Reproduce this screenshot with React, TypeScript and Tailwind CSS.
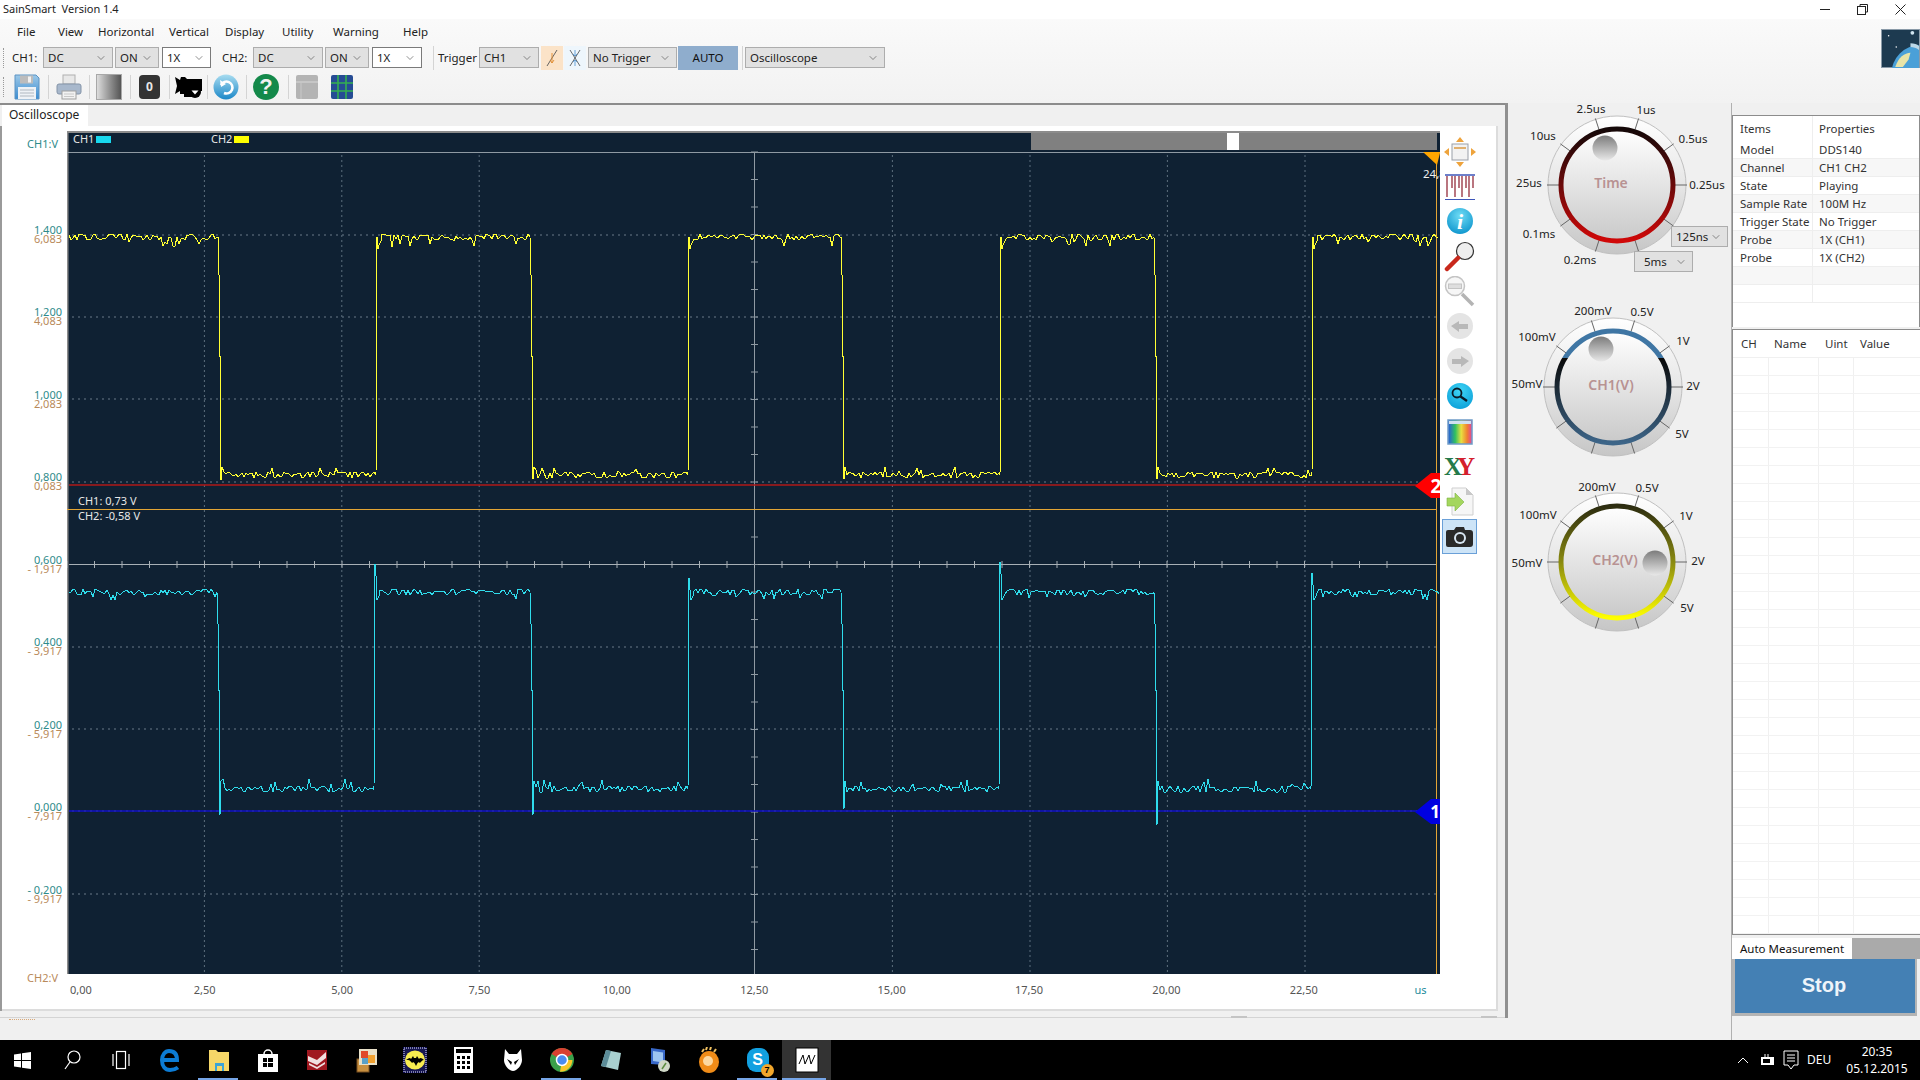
import { ChevronDown } from "lucide-react";

// pseudo random noise so the traces look the same on every render
function makeWave(seed: number, high: number, low: number, edges: { x: number; over: number }[], spikeHi: number, spikeLo: number) {
  let r = seed;
  const rand = () => {
    r = (r * 16807) % 2147483647;
    return r / 2147483647;
  };
  let isHigh = true;
  let cur = 69;
  let d = `M69 ${high}`;
  const noise = (from: number, to: number) => {
    for (let x = from; x < to; x += 2) {
      const p = rand();
      let y = isHigh ? high : low;
      if (p < 0.42) y -= 1 + Math.round(rand() * 2);
      else if (p < 0.8) y += 1 + Math.round(rand() * 2);
      if (rand() < 0.07) y += isHigh ? spikeHi : -spikeLo;
      d += `L${x} ${y}`;
    }
  };
  for (const e of edges) {
    noise(cur, e.x);
    const span = low - high;
    if (isHigh) {
      d += `L${e.x} ${high}L${e.x + 0.5} ${high + span * 0.12}L${e.x + 1.5} ${high + span * 0.2}L${e.x + 1.5} ${high + span * 0.5}L${e.x + 2.5} ${high + span * 0.5}L${e.x + 3} ${low + e.over}L${e.x + 4} ${low - 8}`;
    } else {
      d += `L${e.x} ${low}L${e.x + 1} ${high - e.over}L${e.x + 2} ${high - e.over + 12}L${e.x + 3} ${high + 8}L${e.x + 5} ${high + 4}`;
    }
    cur = e.x + 6;
    isHigh = !isHigh;
  }
  noise(cur, 1440);
  return d;
}

const yellowWave = makeWave(4711, 237, 475, [
  { x: 218, over: 5 }, { x: 376, over: 0 }, { x: 530, over: 4 }, { x: 688, over: 0 },
  { x: 841, over: 4 }, { x: 1000, over: 0 }, { x: 1154, over: 4 }, { x: 1312, over: 0 },
], 7, 5);

const cyanWave = makeWave(90210, 592, 789, [
  { x: 217, over: 26 }, { x: 374, over: 28 }, { x: 530, over: 26 }, { x: 688, over: 14 },
  { x: 841, over: 20 }, { x: 999, over: 30 }, { x: 1154, over: 36 }, { x: 1311, over: 19 },
], 5, 7);

const gridX = [204.4, 341.8, 479.2, 892.4, 1030, 1167.4, 1305];
const gridY = [235, 317, 399, 482, 647, 729, 811, 894];
const ticksH = Array.from({ length: 49 }, (_, i) => 67 + i * 27.5);
const ticksV = Array.from({ length: 30 }, (_, i) => 152 + i * 27.5);

const yLabels = [
  ["1,400", "6,083"], ["1,200", "4,083"], ["1,000", "2,083"], ["0,800", "0,083"], ["0,600", "- 1,917"],
  ["0,400", "- 3,917"], ["0,200", "- 5,917"], ["0,000", "- 7,917"], ["- 0,200", "- 9,917"],
];
const xLabels = ["2,50", "5,00", "7,50", "10,00", "12,50", "15,00", "17,50", "20,00", "22,50"];

function Combo({ label, className, white }: { label: string; className: string; white?: boolean }) {
  return (
    <div className={`flex h-[21px] items-center justify-between border pl-[4px] pr-[5px] text-[11.5px] text-[#222] ${white ? "bg-white border-[#7a7a7a]" : "bg-[#e1e1e1] border-[#adadad]"} ${className}`}>
      <span>{label}</span>
      <ChevronDown size={12} strokeWidth={1.2} className="text-[#444]" />
    </div>
  );
}

function Sep({ className }: { className: string }) {
  return <div className={`h-[24px] w-px bg-[#d4d4d4] ${className}`} />;
}

function Grip() {
  return <div className="ml-[3px] h-[20px] w-px border-l border-dotted border-[#999]" />;
}

function Plot() {
  return (
    <svg width={1373} height={843} viewBox="67 131 1373 843" className="block font-['Noto_Sans',sans-serif]">
      <rect x={67} y={131} width={1373} height={843} fill="#0f2133" />
      <rect x={67} y={131} width={1373} height={2} fill="#8c8c8c" />
      <rect x={67} y={131} width={1.5} height={843} fill="#8c8c8c" />
      <text x={73} y={143} fontSize={11} fill="#e8e8e8">CH1</text>
      <rect x={96} y={136} width={15} height={7} fill="#18d8ee" />
      <text x={211} y={143} fontSize={11} fill="#e8e8e8">CH2</text>
      <rect x={234} y={136} width={15} height={7} fill="#ffff00" />
      <rect x={1031} y={133} width={406} height={17} fill="#808080" />
      <rect x={1227} y={133} width={12} height={17} fill="#ffffff" />

      {gridY.map((y) => (
        <line key={y} x1={72} x2={1437} y1={y} y2={y} stroke="#6b7b89" strokeDasharray="2 4" />
      ))}
      {gridX.map((x) => (
        <line key={x} x1={x} x2={x} y1={155} y2={974} stroke="#5d6f7e" strokeDasharray="2 3" />
      ))}
      <line x1={67} x2={1437} y1={152.5} y2={152.5} stroke="#8f9aa3" />
      <line x1={69} x2={1437} y1={564.5} y2={564.5} stroke="#a8b0b6" />
      <line x1={754.5} x2={754.5} y1={152} y2={974} stroke="#8f9aa3" />
      {ticksH.map((x) => (
        <line key={x} x1={x} x2={x} y1={561} y2={568} stroke="#a8b0b6" />
      ))}
      {ticksV.map((y) => (
        <line key={y} x1={751} x2={758} y1={y} y2={y} stroke="#8f9aa3" />
      ))}

      <line x1={69} x2={1437} y1={485} y2={485} stroke="#b01818" strokeWidth={1.4} />
      <line x1={69} x2={1437} y1={811} y2={811} stroke="#1010c8" strokeWidth={1.4} />
      <line x1={67} x2={1437} y1={509.5} y2={509.5} stroke="#e3a535" />
      <line x1={1436.5} x2={1436.5} y1={152} y2={974} stroke="#e3a535" />

      <path d={yellowWave} fill="none" stroke="#ffff33" strokeWidth={1} shapeRendering="crispEdges" />
      <path d={cyanWave} fill="none" stroke="#2fdcec" strokeWidth={1} shapeRendering="crispEdges" />

      <text x={78} y={505} fontSize={11} fill="#e8e8e8">CH1: 0,73 V</text>
      <text x={78} y={520} fontSize={11} fill="#e8e8e8">CH2: -0,58 V</text>

      <path d="M1423 152H1440V153L1437 165Z" fill="#ffa500" />
      <text x={1423} y={178} fontSize={11.5} fill="#f0f0f0">24,8</text>

      <path d="M1415 486L1431 473H1440V498H1431Z" fill="#ff0000" />
      <text x={1436} y={493} fontSize={19} fontWeight={700} fill="#fff" textAnchor="middle">2</text>
      <path d="M1415 812L1431 799H1440V824H1431Z" fill="#0000e0" />
      <text x={1435} y={818} fontSize={17} fontWeight={700} fill="#fff" textAnchor="middle">1</text>
    </svg>
  );
}

function Slot({ children, className = "" }: { children: React.ReactNode; className?: string }) {
  return <div className={`flex h-[35px] w-[35px] items-center justify-center ${className}`}>{children}</div>;
}

function SideIcons() {
  return (
    <div className="ml-px flex w-[35px] flex-col pt-[3px]">
      <Slot>
        <svg width={32} height={30} viewBox="0 0 32 30">
          <rect x="8" y="7" width="16" height="16" fill="#f2f2f2" stroke="#9a9fa8" />
          <rect x="10" y="10" width="12" height="2" fill="#e0b070" />
          <path d="M16 0l4 5h-8zM16 30l-4-5h8zM0 15l5-4v8zM32 15l-5 4v-8z" fill="#eea33c" />
        </svg>
      </Slot>
      <Slot>
        <svg width={32} height={26} viewBox="0 0 32 26">
          <path d="M1 1h30" stroke="#3d55b8" strokeWidth="1.5" />
          <path d="M3 2v21M8 2v12M11 2v21M15 2v12M18 2v21M22 2v12M25 2v21M29 2v12" stroke="#8c1c2c" strokeWidth="1.2" />
          <path d="M1 25.5h30" stroke="#3d55b8" />
        </svg>
      </Slot>
      <Slot>
        <svg width={28} height={30} viewBox="0 0 28 30">
          <defs>
            <radialGradient id="infoG" cx="50%" cy="30%" r="75%">
              <stop offset="0" stopColor="#6fdcf5" />
              <stop offset="1" stopColor="#0b93cc" />
            </radialGradient>
          </defs>
          <circle cx="14" cy="14" r="13" fill="url(#infoG)" />
          <text x="14" y="22" fontSize="22" fontWeight="700" fontStyle="italic" fill="#fff" textAnchor="middle" fontFamily="Liberation Serif, serif">i</text>
        </svg>
      </Slot>
      <Slot>
        <svg width={32} height={32} viewBox="0 0 32 32">
          <circle cx="21" cy="10" r="8.5" fill="#eeeeee" stroke="#333" strokeWidth="1.2" />
          <path d="M14 17L3 28" stroke="#c8281c" strokeWidth="4.5" strokeLinecap="round" />
        </svg>
      </Slot>
      <Slot>
        <svg width={32} height={32} viewBox="0 0 32 32">
          <circle cx="11" cy="10" r="9.5" fill="#f6f6f6" stroke="#c4c4c4" strokeWidth="1.5" />
          <rect x="4.5" y="8" width="13" height="4.5" fill="#dedede" stroke="#c4c4c4" />
          <path d="M18 18L29 29" stroke="#b4b4b4" strokeWidth="3.5" />
        </svg>
      </Slot>
      <Slot>
        <svg width={28} height={30} viewBox="0 0 28 30">
          <circle cx="14" cy="14" r="13" fill="#e4e4e4" />
          <path d="M5 14l8-5v3h9v5h-9v3z" fill="#b8b8b8" />
        </svg>
      </Slot>
      <Slot>
        <svg width={28} height={30} viewBox="0 0 28 30">
          <circle cx="14" cy="14" r="13" fill="#e4e4e4" />
          <path d="M23 14l-8-5v3H6v5h9v3z" fill="#b8b8b8" />
        </svg>
      </Slot>
      <Slot>
        <svg width={28} height={30} viewBox="0 0 28 30">
          <defs>
            <radialGradient id="searchG" cx="50%" cy="30%" r="75%">
              <stop offset="0" stopColor="#3fd4f5" />
              <stop offset="1" stopColor="#0a9fd8" />
            </radialGradient>
          </defs>
          <circle cx="14" cy="14" r="13" fill="url(#searchG)" />
          <circle cx="11" cy="11" r="4.5" fill="none" stroke="#0b1a26" strokeWidth="1.8" />
          <path d="M14.5 14.5L21 19" stroke="#0b1a26" strokeWidth="2.4" />
        </svg>
      </Slot>
      <Slot>
        <svg width={26} height={26} viewBox="0 0 26 26">
          <defs>
            <linearGradient id="rainbowG" x1="0" x2="1" y1="0" y2="0">
              <stop offset="0" stopColor="#2858e0" />
              <stop offset="0.3" stopColor="#30c060" />
              <stop offset="0.55" stopColor="#e8e040" />
              <stop offset="0.8" stopColor="#f08030" />
              <stop offset="1" stopColor="#e040a0" />
            </linearGradient>
          </defs>
          <rect x="1" y="1" width="24" height="24" fill="url(#rainbowG)" stroke="#6f9cc8" strokeWidth="1.5" />
          <rect x="2" y="2" width="22" height="3" fill="#cfe0f0" />
        </svg>
      </Slot>
      <Slot>
        <div className="font-['Liberation_Serif',serif] text-[25px] leading-none font-bold">
          <span className="text-[#257a4a]">X</span>
          <span className="-ml-[5px] text-[#d4202c]">Y</span>
        </div>
      </Slot>
      <Slot>
        <svg width={28} height={30} viewBox="0 0 28 30">
          <path d="M6 1h14l7 7v20H6z" fill="#f6f6f6" stroke="#cfcfcf" />
          <path d="M20 1l7 7h-7z" fill="#c8c8c8" />
          <path d="M1 11h8V6l9 9-9 9v-5H1z" fill="#a4d65e" stroke="#7cb342" strokeWidth="0.6" />
        </svg>
      </Slot>
      <Slot className="border border-[#6aa0d8] bg-[#cde4f7]">
        <svg width={27} height={22} viewBox="0 0 27 22">
          <path d="M2 4h6l2-3h8l1 3h5a3 3 0 0 1 3 3v11a3 3 0 0 1-3 3H2a2 2 0 0 1-2-2V6a2 2 0 0 1 2-2z" fill="#2a2a2a" />
          <circle cx="14" cy="12" r="6" fill="#d8e6f2" />
          <circle cx="14" cy="12" r="4" fill="#2a2a2a" />
        </svg>
      </Slot>
    </div>
  );
}

function Scope() {
  return (
    <div className="flex h-[885px] w-[1496px] border-r-2 border-b-2 border-[#dcdcdc] bg-white pt-[5px]">
      <div className="flex w-[65px] flex-col items-end pr-[5px] text-[11px] text-[#2e8b8b]">
        <div className="flex h-[26px] items-center pr-[4px]">CH1:V</div>
        <div className="h-[67.5px]" />
        {yLabels.map(([a, b]) => (
          <div key={a} className="flex h-[82.5px] flex-col items-end leading-[9px]">
            <span>{a}</span>
            <span className="text-[#b98a5a]">{b}</span>
          </div>
        ))}
        <div className="flex h-[22px] items-center pr-[4px] text-[#b98a5a]">CH2:V</div>
      </div>
      <div className="flex w-[1374px] flex-col">
        <Plot />
        <div className="flex h-[32px] items-center text-center text-[11px] text-[#555]">
          <span className="w-[28px]">0,00</span>
          <span className="w-[41px]" />
          {xLabels.map((l) => (
            <span key={l} className="w-[137.4px]">{l}</span>
          ))}
          <span className="ml-[38px] w-[20px] text-[#1c8c9c]">us</span>
        </div>
      </div>
      <SideIcons />
    </div>
  );
}

type KnobProps = {
  id: string;
  cx: number;
  cy: number;
  top: number;
  h: number;
  title: string;
  titleX: number;
  titleY: number;
  dotX: number;
  dotY: number;
  stops: [string, string][];
  labels: [string, number, number][];
};

function Knob({ id, cx, cy, top, h, title, titleX, titleY, dotX, dotY, stops, labels }: KnobProps) {
  const angles = [18, 54, 90, 126, 162, 198, 234, 270, 306, 342];
  return (
    <svg width={223} height={h} viewBox={`1508 ${top} 223 ${h}`} className="block font-['Noto_Sans',sans-serif]">
      <defs>
        <linearGradient id={`${id}-o`} x1="0" x2="0" y1="0" y2="1">
          <stop offset="0" stopColor="#ffffff" />
          <stop offset="0.5" stopColor="#e6e6e6" />
          <stop offset="1" stopColor="#c6c6c6" />
        </linearGradient>
        <linearGradient id={`${id}-i`} x1="0" x2="0" y1="0" y2="1">
          <stop offset="0" stopColor="#ffffff" />
          <stop offset="1" stopColor="#c9c9c9" />
        </linearGradient>
        <linearGradient id={`${id}-r`} x1="0" x2="0" y1="0" y2="1">
          {stops.map(([o, c], i) => (
            <stop key={i} offset={o} stopColor={c} />
          ))}
        </linearGradient>
        <linearGradient id={`${id}-d`} x1="0" x2="0" y1="0" y2="1">
          <stop offset="0" stopColor="#7c7c7c" />
          <stop offset="1" stopColor="#e8e8e8" />
        </linearGradient>
      </defs>
      <circle cx={cx} cy={cy} r={69} fill={`url(#${id}-o)`} stroke="#c0c0c0" />
      {angles.map((a) => {
        const s = Math.sin((a * Math.PI) / 180);
        const c = Math.cos((a * Math.PI) / 180);
        return <line key={a} x1={cx + s * 58} y1={cy - c * 58} x2={cx + s * 70} y2={cy - c * 70} stroke="#666" />;
      })}
      <circle cx={cx} cy={cy} r={56} fill={`url(#${id}-i)`} stroke={`url(#${id}-r)`} strokeWidth={5} />
      <circle cx={dotX} cy={dotY} r={12.5} fill={`url(#${id}-d)`} />
      <text x={titleX} y={titleY} fontSize={14} fontWeight={600} fill="#b89292" textAnchor="middle" dominantBaseline="central">{title}</text>
      {labels.map(([t, x, y]) => (
        <text key={t} x={x} y={y} fontSize={11.5} fill="#222" textAnchor="middle" dominantBaseline="central">{t}</text>
      ))}
    </svg>
  );
}

function KnobColumn() {
  return (
    <div className="flex w-[223px] flex-col">
      <div className="relative h-[182px]">
        <Knob
          id="t" cx={1617} cy={185} top={103} h={182} title="Time" titleX={1611} titleY={182} dotX={1605} dotY={148}
          stops={[["0", "#140808"], ["0.5", "#6a0a0a"], ["1", "#d00808"]]}
          labels={[["2.5us", 1591, 108], ["1us", 1646, 109], ["0.5us", 1693, 138], ["0.25us", 1707, 184], ["25us", 1529, 182], ["10us", 1543, 135], ["0.1ms", 1539, 233], ["0.2ms", 1580, 259]]}
        />
        <Combo label="125ns" className="absolute top-[123px] left-[163px] w-[57px]" />
        <Combo label="5ms" className="absolute top-[148px] left-[126px] w-[59px] pl-[9px]" />
      </div>
      <Knob
        id="a" cx={1613} cy={387} top={285} h={180} title="CH1(V)" titleX={1611} titleY={384} dotX={1601} dotY={349}
        stops={[["0", "#3f76a4"], ["0.24", "#3f76a4"], ["0.245", "#0a0a0a"], ["1", "#3d6588"]]}
        labels={[["200mV", 1593, 310], ["0.5V", 1642, 311], ["1V", 1683, 340], ["2V", 1693, 385], ["5V", 1682, 433], ["50mV", 1527, 383], ["100mV", 1537, 336]]}
      />
      <Knob
        id="b" cx={1617} cy={562} top={465} h={180} title="CH2(V)" titleX={1615} titleY={559} dotX={1655} dotY={563}
        stops={[["0", "#2c2c10"], ["0.5", "#8a8a10"], ["1", "#ffff00"]]}
        labels={[["200mV", 1597, 486], ["0.5V", 1647, 487], ["1V", 1686, 515], ["2V", 1698, 560], ["5V", 1687, 607], ["50mV", 1527, 562], ["100mV", 1538, 514]]}
      />
    </div>
  );
}

const props = [
  ["Model", "DDS140"], ["Channel", "CH1 CH2"], ["State", "Playing"], ["Sample Rate", "100M Hz"],
  ["Trigger State", "No Trigger"], ["Probe", "1X (CH1)"], ["Probe", "1X (CH2)"], ["", ""], ["", ""],
];

function RightPanel() {
  return (
    <div className="flex w-[189px] flex-col border-l border-[#b0b0b0] pt-[12px]">
      <div className="h-[212px] overflow-hidden border-t border-r border-l border-[#8c8c8c] bg-white text-[11.5px] text-[#333]">
        <div className="flex h-[25px]">
          <div className="w-[80px] border-r border-[#eee] pt-[4px] pl-[7px]">Items</div>
          <div className="pt-[4px] pl-[6px]">Properties</div>
        </div>
        {props.map(([a, b], i) => (
          <div key={i} className={`flex h-[18px] items-center border-b border-[#eeeeee] ${i % 2 === 1 ? "bg-[#f7f7f7]" : "bg-white"}`}>
            <div className="flex h-full w-[80px] items-center border-r border-[#eee] pl-[7px]">{a}</div>
            <div className="pl-[6px]">{b}</div>
          </div>
        ))}
      </div>
      <div className="mt-[2px] flex h-[606px] flex-col overflow-hidden border-t border-b border-l border-[#8c8c8c] bg-white text-[11.5px] text-[#333]">
        <div className="flex h-[28px] shrink-0 items-center border-b border-[#f0f0f0]">
          <div className="w-[36px] pl-[8px]">CH</div>
          <div className="w-[50px] pl-[5px]">Name</div>
          <div className="w-[35px] pl-[6px]">Uint</div>
          <div className="pl-[6px]">Value</div>
        </div>
        {Array.from({ length: 32 }, (_, i) => (
          <div key={i} className="flex h-[18px] shrink-0 border-b border-[#f2f2f2]">
            <div className="w-[36px] border-r border-[#f0f0f0]" />
            <div className="w-[50px] border-r border-[#f0f0f0]" />
            <div className="w-[35px] border-r border-[#f0f0f0]" />
          </div>
        ))}
      </div>
      <div className="mt-[3px] flex h-[21px] text-[11.5px] text-[#111]">
        <div className="flex w-[120px] items-center bg-white pl-[8px]">Auto Measurement</div>
        <div className="flex-1 bg-[#aaaaaa]" />
      </div>
      <div className="mr-[3px] h-[57px] border-r-2 border-b-[3px] border-l-[3px] border-[#b4b4b4]">
        <div className="flex h-full items-center justify-center bg-[#4480b4] pr-[2px] pb-[2px] font-['Liberation_Sans',sans-serif] text-[20px] font-bold text-[#eef4fa]">Stop</div>
      </div>
    </div>
  );
}

function Toolbars() {
  return (
    <div className="bg-gradient-to-b from-[#fafafa] to-[#f2f2f2]">
      <div className="relative flex h-[26px] items-center text-[11.5px] text-[#222]">
        <span className="ml-[17px] w-[41px]">File</span>
        <span className="w-[40px]">View</span>
        <span className="w-[71px]">Horizontal</span>
        <span className="w-[56px]">Vertical</span>
        <span className="w-[57px]">Display</span>
        <span className="w-[51px]">Utility</span>
        <span className="w-[70px]">Warning</span>
        <span>Help</span>
        <div className="absolute top-[10px] right-0 flex h-[39px] w-[39px] items-center justify-center overflow-hidden bg-[#8a9aa8] p-[1px]">
          <svg width={39} height={39} viewBox="0 0 39 39">
            <rect width="39" height="39" fill="#1d3a50" />
            <circle cx="32" cy="3" r="2" fill="#d0e4f0" />
            <circle cx="7" cy="6" r="0.8" fill="#fff" />
            <circle cx="15" cy="18" r="0.8" fill="#fff" />
            <circle cx="40" cy="46" r="30" fill="#4aa0d8" />
            <path d="M14 39c3-10 10-15 16-15l-2 7-6 8z" fill="#e8e4a8" />
            <path d="M30 14c4 0 7 1 9 3v4c-3-2-6-3-9-3z" fill="#bcd8e8" />
          </svg>
        </div>
      </div>
      <div className="flex h-[25px] items-center text-[11.5px] text-[#222]">
        <Grip />
        <span className="ml-[8px] w-[31px]">CH1:</span>
        <Combo label="DC" className="w-[70px]" />
        <Combo label="ON" className="ml-[2px] w-[44px]" />
        <Combo label="1X" white className="ml-[3px] w-[49px]" />
        <span className="ml-[11px] w-[31px]">CH2:</span>
        <Combo label="DC" className="w-[70px]" />
        <Combo label="ON" className="ml-[2px] w-[44px]" />
        <Combo label="1X" white className="ml-[3px] w-[50px]" />
        <Sep className="ml-[11px]" />
        <span className="ml-[4px] w-[41px]">Trigger</span>
        <Combo label="CH1" className="w-[60px]" />
        <div className="ml-[2px] flex h-[24px] w-[22px] items-center justify-center bg-[#fbe3c8]">
          <svg width={16} height={20} viewBox="0 0 16 20">
            <path d="M3 18L13 2" stroke="#555" strokeWidth="0.9" fill="none" />
            <path d="M8 5v10M6 12l2 3 2-3" stroke="#e08a2c" strokeWidth="0.9" fill="none" />
          </svg>
        </div>
        <div className="ml-px flex h-[24px] w-[22px] items-center justify-center bg-[#eef6fc]">
          <svg width={16} height={20} viewBox="0 0 16 20">
            <path d="M3 2l10 16M13 2L3 18" stroke="#444" strokeWidth="0.8" fill="none" />
            <path d="M8 2v6M6 6l2 2 2-2M8 18v-6M6 14l2-2 2 2" stroke="#5a9ad4" strokeWidth="0.9" fill="none" />
          </svg>
        </div>
        <Combo label="No Trigger" className="ml-[2px] w-[89px]" />
        <div className="ml-px flex h-[24px] w-[60px] items-center justify-center bg-[#8fadcd] text-[#111]">AUTO</div>
        <Sep className="ml-[4px]" />
        <Combo label="Oscilloscope" className="ml-[2px] w-[140px]" />
      </div>
      <div className="flex h-[33px] items-center">
        <Grip />
        <svg width={26} height={26} viewBox="0 0 26 26" className="ml-[10px]">
          <defs>
            <linearGradient id="saveG" x1="0" x2="0" y1="0" y2="1">
              <stop offset="0" stopColor="#9cc8e8" />
              <stop offset="1" stopColor="#3c8cd0" />
            </linearGradient>
          </defs>
          <path d="M1 1h21l3 3v21H1z" fill="url(#saveG)" stroke="#5c94c4" />
          <rect x="6" y="1.5" width="13" height="8" fill="#bcbcbc" />
          <rect x="14" y="2.5" width="3" height="6" fill="#f0f0f0" />
          <rect x="4" y="13" width="18" height="12" fill="#eef2f6" />
          <path d="M6 16h14M6 19h14M6 22h14" stroke="#b0b8c0" />
        </svg>
        <Sep className="ml-[8px]" />
        <svg width={26} height={26} viewBox="0 0 26 26" className="ml-[7px]">
          <rect x="7" y="1" width="12" height="9" fill="#e8e8e8" stroke="#b0b0b0" />
          <rect x="1" y="10" width="24" height="10" rx="2" fill="#a8b8cc" stroke="#8494a8" />
          <rect x="6" y="17" width="14" height="8" fill="#f2f2f2" stroke="#a0a0a0" />
          <path d="M8 20h10M8 22.5h10" stroke="#c8c8c8" />
        </svg>
        <Sep className="ml-[7px]" />
        <div className="ml-[6px] h-[26px] w-[26px] border border-[#a8a8a8] bg-gradient-to-r from-[#dddddd] to-[#555555]" />
        <Sep className="ml-[8px]" />
        <div className="ml-[8px] flex h-[24px] w-[21px] items-center justify-center rounded-[4px] bg-[#333333] text-[12px] font-bold text-[#e8e8e8]">0</div>
        <Sep className="ml-[9px]" />
        <svg width={27} height={22} viewBox="0 0 27 22" className="ml-[5px]">
          <path d="M0 1l5 3 1-3h4l2 2h15v12H17v6H9v-3H5v-3l-5 3 2-8z" fill="#000" />
          <circle cx="20" cy="16" r="6" fill="#000" />
          <path d="M16.500 14.500h7L20 18.500z" fill="#fff" />
        </svg>
        <Sep className="ml-[5px]" />
        <svg width={26} height={26} viewBox="0 0 26 26" className="ml-[5px]">
          <defs>
            <linearGradient id="refreshG" x1="0" x2="0" y1="0" y2="1">
              <stop offset="0" stopColor="#a8dcf0" />
              <stop offset="1" stopColor="#1c88c8" />
            </linearGradient>
          </defs>
          <circle cx="13" cy="13" r="12.500" fill="url(#refreshG)" />
          <path d="M8 11a6 6 0 1 1 3 8" fill="none" stroke="#fff" strokeWidth="2.600" />
          <path d="M7 6l1 7 5-3z" fill="#fff" />
        </svg>
        <Sep className="ml-[7px]" />
        <div className="ml-[6px] flex h-[26px] w-[26px] items-center justify-center rounded-full bg-[#14894a] font-['Liberation_Sans',sans-serif] text-[22px] font-bold text-[#f2f2f2]">?</div>
        <Sep className="ml-[9px]" />
        <svg width={22} height={24} viewBox="0 0 22 24" className="ml-[7px]">
          <rect width="22" height="24" rx="2" fill="#b4b4b4" />
          <path d="M0 7h22" stroke="#d8d8d8" />
          <path d="M5 7v17" stroke="#c8c8c8" />
        </svg>
        <svg width={22} height={24} viewBox="0 0 22 24" className="ml-[13px]">
          <rect width="22" height="24" rx="2" fill="#264c94" />
          <path d="M7 0v24M15 0v24M0 8h22M0 16h22" stroke="#35b050" strokeWidth="1.600" />
        </svg>
      </div>
    </div>
  );
}

function TaskSlot({ children, open, active }: { children: React.ReactNode; open?: boolean; active?: boolean }) {
  return (
    <div className={`relative flex h-[40px] w-[49px] items-center justify-center ${active ? "bg-[#333333]" : ""}`}>
      {children}
      {open && <div className={`absolute right-[5px] bottom-0 h-[2px] bg-[#76a5e6] ${active ? "left-0 right-0" : "left-[4px]"}`} />}
    </div>
  );
}

function Taskbar() {
  return (
    <div className="flex h-[40px] items-center bg-black pl-0 text-white">
      <div className="-ml-[2px] flex">
        <TaskSlot>
          <svg width={17} height={17} viewBox="0 0 17 17" fill="#fff">
            <path d="M0 2.400L7 1.400V8H0zM8 1.200L17 0V8H8zM0 9h7v6.600L0 14.600zM8 9h9v8l-9-1.200z" />
          </svg>
        </TaskSlot>
        <TaskSlot>
          <svg width={18} height={20} viewBox="0 0 18 20" fill="none" stroke="#fff" strokeWidth="1.200">
            <circle cx="11" cy="7" r="6" />
            <path d="M7 12L2 19" />
          </svg>
        </TaskSlot>
        <TaskSlot>
          <svg width={20} height={20} viewBox="0 0 20 20" fill="none" stroke="#fff" strokeWidth="1.200">
            <rect x="5.500" y="1.500" width="9" height="17" />
            <path d="M2 4v12M18 4v12" />
          </svg>
        </TaskSlot>
        <TaskSlot>
          <svg width={20} height={24} viewBox="0 0 20 24" fill="none">
            <path d="M4 12h13c0-6-3-9-8-9-4 0-7 4-7 9 0 6 3 10 8 10 3 0 6-1 8-2.500" stroke="#0c7cd5" strokeWidth="4" />
          </svg>
        </TaskSlot>
        <TaskSlot open>
          <svg width={24} height={24} viewBox="0 0 24 24">
            <path d="M2 2h7l2 2h11v19H2z" fill="#f6d768" />
            <rect x="8" y="15" width="9" height="8" fill="#3ba4d8" />
            <rect x="10" y="18" width="5" height="5" fill="#f6d768" />
          </svg>
        </TaskSlot>
        <TaskSlot>
          <svg width={22} height={26} viewBox="0 0 22 26">
            <path d="M1 7h20v18H1z" fill="#fff" />
            <path d="M7 7a4 4 0 0 1 8 0" fill="none" stroke="#fff" strokeWidth="1.500" />
            <path d="M6 11h4v4H6zM11 11h5v4h-5zM6 16h4v4H6zM11 16h5v4h-5z" fill="#000" />
          </svg>
        </TaskSlot>
        <TaskSlot>
          <svg width={24} height={24} viewBox="0 0 24 24">
            <path d="M2 2h20v20H2z" fill="#a01820" />
            <path d="M3 8l9 4 9-8v6l-9 7-9-4zM4 15l8 4 8-5v2l-8 5-8-4z" fill="#f0e0e0" />
          </svg>
        </TaskSlot>
        <TaskSlot>
          <svg width={24} height={26} viewBox="0 0 24 26">
            <rect x="3" y="12" width="12" height="13" fill="#c89040" stroke="#7a5020" />
            <rect x="5" y="2" width="18" height="16" fill="#e8e0c8" />
            <rect x="7" y="4" width="7" height="7" fill="#e04828" />
            <rect x="14" y="8" width="7" height="8" fill="#f0a030" />
            <rect x="8" y="11" width="6" height="6" fill="#58a0c8" />
          </svg>
        </TaskSlot>
        <TaskSlot>
          <svg width={24} height={26} viewBox="0 0 24 26">
            <rect width="24" height="26" fill="#0a0a50" />
            <rect x="1" y="1" width="22" height="24" fill="#161650" stroke="#e8e8ff" strokeDasharray="1 1" />
            <ellipse cx="12" cy="13" rx="10" ry="9.500" fill="#f8ec50" />
            <path d="M3 13c3-2 4-3 5-1l2-3 1 2h2l1-2 2 3c1-2 3-1 5 1-2 0-3 2-4 3-1-1-2-1-3 1l-1 2-1-2c-1-2-2-2-3-1-1-1-2-3-4-3z" fill="#000" />
          </svg>
        </TaskSlot>
        <TaskSlot>
          <svg width={19} height={26} viewBox="0 0 19 26">
            <rect width="19" height="26" fill="#fff" />
            <rect x="2" y="2" width="15" height="4" fill="#000" />
            <path d="M3 9h3v3H3zM8 9h3v3H8zM13 9h3v3h-3zM3 14h3v3H3zM8 14h3v3H8zM13 14h3v3h-3zM3 19h3v3H3zM8 19h3v3H8zM13 19h3v3h-3z" fill="#000" />
          </svg>
        </TaskSlot>
        <TaskSlot>
          <svg width={18} height={24} viewBox="0 0 18 24">
            <path d="M1 1l4 5h8l4-5 1 11c0 5-5 11-9 11S0 17 0 12z" fill="#fff" />
            <path d="M3 11l5 3-1 3zM15 11l-5 3 1 3z" fill="#000" />
          </svg>
        </TaskSlot>
        <TaskSlot open>
          <svg width={24} height={24} viewBox="0 0 24 24">
            <circle cx="12" cy="12" r="12" fill="#3aa04a" />
            <path d="M12 12L1.600 6A12 12 0 0 1 22.400 6z" fill="#d84030" />
            <path d="M12 12h10.400A12 12 0 0 1 10 23.800z" fill="#f6c628" />
            <circle cx="12" cy="12" r="5.500" fill="#4a8cf0" stroke="#fff" strokeWidth="1.500" />
          </svg>
        </TaskSlot>
        <TaskSlot>
          <svg width={24} height={24} viewBox="0 0 24 24">
            <path d="M7 2l15 3-3 17L2 18z" fill="#a8d0d0" />
            <path d="M7 2l5 1-5 16-5-1z" fill="#5c8c98" />
          </svg>
        </TaskSlot>
        <TaskSlot>
          <svg width={24} height={26} viewBox="0 0 24 26">
            <path d="M3 1l14 2v15L3 17z" fill="#3868c8" />
            <path d="M5 4l10 1.500v10L5 14z" fill="#9cc4f0" />
            <circle cx="16" cy="19" r="6" fill="#d0d8c8" />
            <path d="M14 22l4-6" stroke="#5c8c40" strokeWidth="1.500" />
          </svg>
        </TaskSlot>
        <TaskSlot>
          <svg width={24} height={26} viewBox="0 0 24 26">
            <ellipse cx="12" cy="15" rx="10" ry="11" fill="#f08c18" />
            <circle cx="11" cy="14" r="5" fill="#fcd8a0" />
            <path d="M5 5l2-3M9 3l1-3M13 3l1-3M17 5l2-3" stroke="#f0c060" strokeWidth="2" />
          </svg>
        </TaskSlot>
        <TaskSlot open>
          <div className="relative flex h-[24px] w-[22px] items-center justify-center rounded-[9px] bg-[#12a0e0] font-['Liberation_Sans',sans-serif] text-[16px] font-bold">
            S
            <span className="absolute -right-[5px] -bottom-[5px] flex h-[13px] w-[13px] items-center justify-center rounded-full bg-[#f2a72c] text-[9px] text-black">7</span>
          </div>
        </TaskSlot>
        <TaskSlot active open>
          <svg width={24} height={26} viewBox="0 0 24 26">
            <rect x="1" y="1" width="22" height="24" fill="#fff" stroke="#000" />
            <path d="M4 17l4-9 2 9 4-9 2 9 4-9" fill="none" stroke="#000" />
          </svg>
        </TaskSlot>
      </div>
      <div className="ml-auto flex items-center text-[12px]">
        <svg width={12} height={8} viewBox="0 0 12 8" fill="none" stroke="#fff" className="mr-[10px]">
          <path d="M1 7l5-5 5 5" />
        </svg>
        <svg width={16} height={16} viewBox="0 0 16 16" className="mr-[8px]">
          <rect x="2" y="5" width="13" height="8" fill="#fff" />
          <path d="M6 2v3M9 2v3" stroke="#fff" />
          <rect x="4" y="7" width="7" height="4" fill="#000" />
        </svg>
        <svg width={16} height={20} viewBox="0 0 16 20" fill="none" stroke="#fff" className="mr-[8px]">
          <path d="M1 1h14v14h-4l-3 4-3-4H1zM4 5h8M4 8h8M4 11h8" />
        </svg>
        <span className="mr-[19px] w-[22px]">DEU</span>
        <div className="mr-[14px] flex w-[58px] flex-col items-center gap-[3px] leading-[14px]">
          <span>20:35</span>
          <span>05.12.2015</span>
        </div>
      </div>
    </div>
  );
}

export default function App() {
  return (
    <div className="flex h-[1080px] w-[1920px] flex-col overflow-hidden bg-[#f0f0f0] font-['Noto_Sans',sans-serif] text-[#222]">
      <div className="flex h-[19px] items-center bg-white pl-[3px] text-[11px]">
        <span>SainSmart&nbsp; Version 1.4</span>
        <div className="ml-auto flex items-center">
          <svg width={12} height={2} viewBox="0 0 12 2" className="mr-[25px]"><rect width="10" height="1" fill="#222" /></svg>
          <svg width={11} height={11} viewBox="0 0 11 11" fill="none" stroke="#222" className="mr-[27px]">
            <rect x="0.500" y="2.500" width="8" height="8" />
            <path d="M3 2.500V0.500h7.500V8H8.500" />
          </svg>
          <svg width={11} height={11} viewBox="0 0 11 11" stroke="#222" className="mr-[14px]">
            <path d="M0.500 0.500L10.500 10.500M10.500 0.500L0.500 10.500" />
          </svg>
        </div>
      </div>
      <Toolbars />
      <div className="flex h-[937px]">
        <div className="relative flex h-[915px] w-[1505px] flex-col border-t-2 border-b border-[#8c8c8c] border-b-[#d4d4d4]">
          <div className="flex h-[21px] items-end pl-[2px]">
            <div className="flex h-[21px] w-[86px] items-center bg-white pb-[2px] pl-[7px] text-[12px]">Oscilloscope</div>
          </div>
          <div className="border-l-2 border-[#9a9a9a]">
            <Scope />
          </div>
          {/* leftovers of the splitter below the panel */}
          <div className="absolute bottom-[-6px] left-[9px] h-[4px] w-[26px] border-t border-dotted border-[#d8a878]" />
          <div className="absolute right-[258px] bottom-[-1px] h-[2px] w-[16px] bg-[#c4c4c4]" />
          <div className="absolute right-[8px] bottom-[-1px] h-[2px] w-[16px] bg-[#c4c4c4]" />
        </div>
        <div className="h-[915px] w-[3px] bg-[#909090]" />
        <KnobColumn />
        <RightPanel />
      </div>
      <Taskbar />
    </div>
  );
}
